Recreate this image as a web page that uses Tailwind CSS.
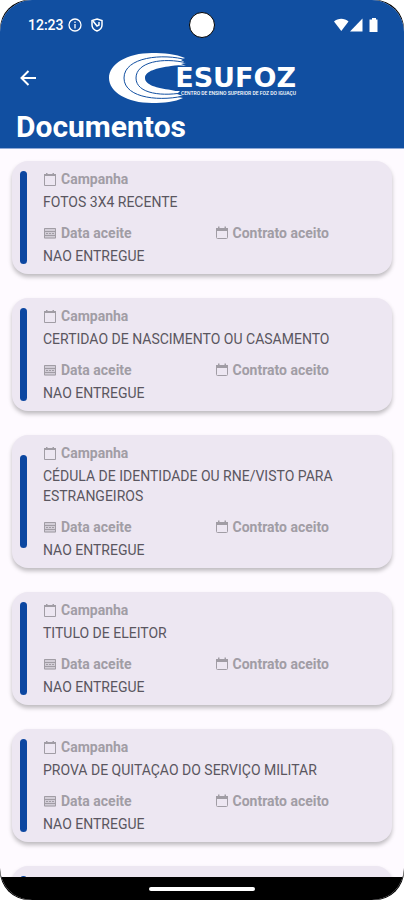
<!DOCTYPE html>
<html lang="pt-BR">
<head>
  <meta charset="UTF-8" />
  <meta name="viewport" content="width=device-width, initial-scale=1.0" />
  <title>CESUFOZ • Documentos</title>
  <script src="https://cdn.jsdelivr.net/npm/@tailwindcss/browser@4"></script>
  <style>
    body {
      font-family: Roboto, 'Liberation Sans', sans-serif;
    }
  </style>
</head>
<body class="bg-white">

  <!-- ICONS -->
  <svg class="hidden">
    <symbol id="icon-calendar" viewBox="0 0 14 14">
      <path d="M1.500 2.500h11v11h-11z" fill="none" stroke="currentColor" />
      <path d="M1 2h12v2H1zM3 1h1.500v1H3zM9.500 1H11v1H9.500z" fill="currentColor" />
    </symbol>
    <symbol id="icon-date" viewBox="0 0 14 14">
      <path d="M1 2h12v10.500H1z" fill="currentColor" opacity=".35" />
      <path d="M1.500 2.500h11v9.500h-11zM1 5.500h12M1 9.500h12" fill="none" stroke="currentColor" />
      <path d="M3 7.500h2M6 7.500h2M9 7.500h2" stroke="currentColor" />
    </symbol>
    <symbol id="icon-contract" viewBox="0 0 14 14">
      <rect x="1.500" y="2.500" width="11" height="10" rx="1" fill="none" stroke="currentColor" />
      <path d="M1 2h12v3H1zM3 .5h1.500V2H3zM9.500.5H11V2H9.500z" fill="currentColor" />
    </symbol>
  </svg>

  <div class="h-screen bg-black rounded-[29px] overflow-hidden">
    <div class="h-full flex flex-col bg-[#fefaff] rounded-[32px] overflow-hidden">

      <!-- HEADER -->
      <header class="bg-[#114fa1] text-white border-b border-[#8fa9d6]">
        <div class="relative h-[50px] pl-7 pr-[26px] flex items-center justify-between">
          <div class="flex items-center gap-1">
            <span class="text-sm font-medium">12:23</span>
            <svg class="size-[14px]" viewBox="0 0 14 14" fill="none" stroke="currentColor" stroke-width="1.300">
              <circle cx="7" cy="7" r="6" />
              <path d="M7 6v4.500M7 3.500v1.500" />
            </svg>
            <svg class="size-[14px] ml-1" viewBox="0 0 14 14" fill="none" stroke="currentColor" stroke-width="1.500">
              <path d="M7 1l5 1.500v4.500c0 2.800-2 5-5 6-3-1-5-3.200-5-6V2.500z" />
              <path d="M3 3l4 5 2-1V4" />
            </svg>
          </div>
          <div class="absolute left-1/2 top-3 -translate-x-1/2 size-[26px] rounded-full bg-white border border-black"></div>
          <svg class="w-[44px] h-[14px]" viewBox="0 0 44 14" fill="currentColor">
            <path d="M0 3.500C4-.3 10.500-.3 14.500 3.500L7.300 13z" />
            <path d="M28.500.5V13.500H16z" />
            <path d="M36.500 1.500h1.500V0h4v1.500h1.500V14h-8V1.500z" />
          </svg>
        </div>

        <div class="relative h-14 px-4 flex items-center justify-center">
          <button aria-label="Voltar" class="absolute left-4 size-6 flex items-center justify-center">
            <svg class="size-4" viewBox="0 0 16 16" fill="none" stroke="currentColor" stroke-width="2">
              <path d="M16 8H2M8.500 1L1.500 8l7 7" />
            </svg>
          </button>
          <svg class="w-[190px] h-[52px] overflow-visible" viewBox="0 0 190 52" role="img" aria-label="CESUFOZ">
            <path d="M78 6C69 2 57 1 45 1 20 1 2 12 2 26s18 25 43 25c12 0 23-1 31-5l-5-1 5-1-6-2 3-3c-3 0-6 0-9-1-14-2-26-5-26-12s12-10 26-12c5-1 10-1 15 0l-5-2 5-1-5-3z" fill="#fff" />
            <path d="M80 8C56 1 17 5 17 26s39 24 63 17M80 11C56 5 29 10 29 26s27 19 51 14" fill="none" stroke="#114fa1" />
            <text x="189" y="35" text-anchor="end" font-family="DejaVu Sans" font-weight="700" font-size="27" fill="#fff">ESUFOZ</text>
            <text x="189" y="43" text-anchor="end" font-family="Roboto" font-weight="500" font-size="5" fill="#fff">CENTRO DE ENSINO SUPERIOR DE FOZ DO IGUAÇU</text>
          </svg>
        </div>

        <h1 class="px-4 h-[42px] leading-[42px] text-[30px] font-bold">Documentos</h1>
      </header>

      <!-- LISTA -->
      <main id="documentos" class="flex-1 min-h-0 overflow-hidden px-3 pt-3 flex flex-col gap-6"></main>

      <!-- BARRA DE NAVEGAÇÃO -->
      <footer class="h-[23px] shrink-0 bg-black flex items-center justify-center">
        <div class="w-[106px] h-1 rounded-full bg-white"></div>
      </footer>
    </div>
  </div>

  <script>
  const documentos = [
    "FOTOS 3X4 RECENTE",
    "CERTIDAO DE NASCIMENTO OU CASAMENTO",
    "CÉDULA DE IDENTIDADE OU RNE/VISTO PARA ESTRANGEIROS",
    "TITULO DE ELEITOR",
    "PROVA DE QUITAÇAO DO SERVIÇO MILITAR",
    "HISTORICO ESCOLAR"
  ];

  const rotulo = (icone, texto) => `
    <div class="flex items-center gap-1 text-[#a19da5] font-bold">
      <svg class="size-[14px]"><use href="#${icone}" /></svg>
      <span>${texto}</span>
    </div>`;

  const container = document.getElementById("documentos");

  documentos.forEach((nome) => {
    const card = document.createElement("article");
    card.className = "shrink-0 flex items-center gap-4 py-2 pl-2 pr-1.5 rounded-2xl bg-[#ede7f2] shadow-[0_3px_4px_rgba(0,0,0,0.25)] text-sm leading-5";
    card.innerHTML = `
      <div class="w-[7px] h-[93px] shrink-0 rounded-full bg-[#0c47a1]"></div>
      <div class="flex-1 text-[#5a5660]">
        ${rotulo("icon-calendar", "Campanha")}
        <p class="mt-[3px]">${nome}</p>
        <div class="mt-[11px] grid grid-cols-2">
          ${rotulo("icon-date", "Data aceite")}
          ${rotulo("icon-contract", "Contrato aceito")}
        </div>
        <p class="mt-[3px]">NAO ENTREGUE</p>
      </div>
    `;
    container.appendChild(card);
  });
  </script>
</body>
</html>
